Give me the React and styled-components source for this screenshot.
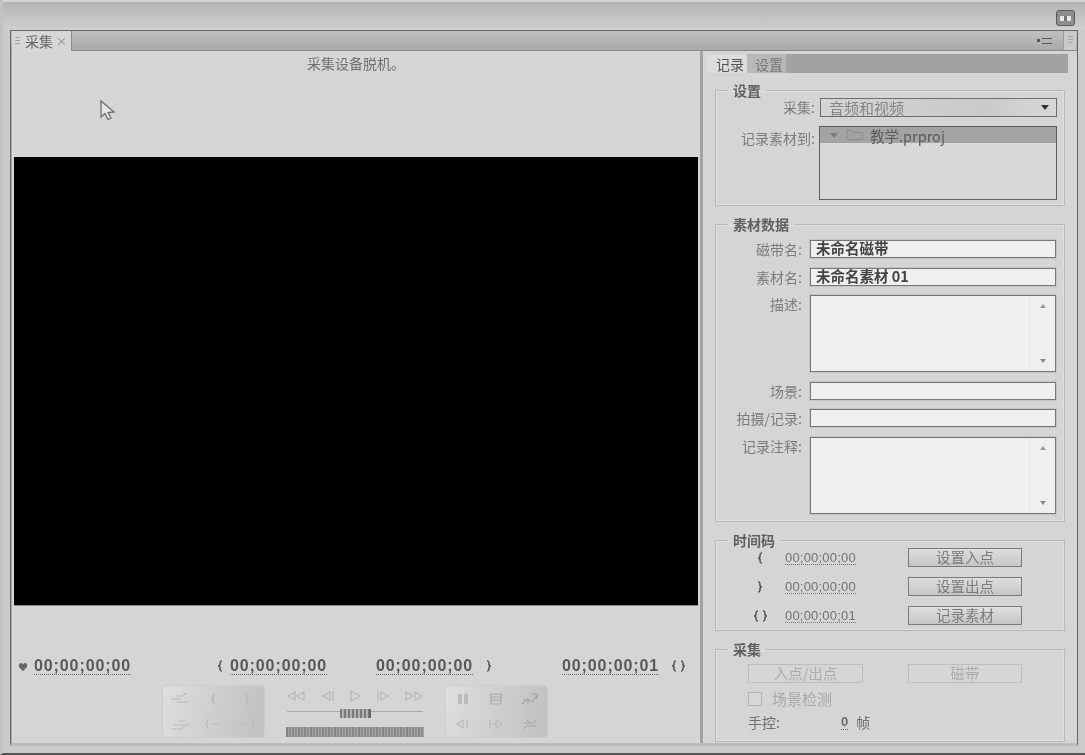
import styled, { createGlobalStyle } from "styled-components";

const GlobalStyle = createGlobalStyle`
  html, body { margin: 0; padding: 0; background: #d2d2d2; }
  body { font-family: "Noto Sans CJK SC", "Liberation Sans", sans-serif; overflow: hidden; }
  * { box-sizing: border-box; }
`;

const I = ({ w = 16, h = 12, children, c = "#b8b8b8", sw = 1.2 }) => (
  <svg width={w} height={h} viewBox={`0 0 ${w} ${h}`} fill="none" stroke={c} strokeWidth={sw}>
    {children}
  </svg>
);

const BraceIn = ({ c }) => (
  <I w={8} h={12} c={c} sw={1.6}><path d="M6 1C4 1 4 2 4 4c0 1-1 2-2 2 1 0 2 1 2 2 0 2 0 3 2 3" /></I>
);
const BraceOut = ({ c }) => (
  <I w={8} h={12} c={c} sw={1.6}><path d="M2 1c2 0 2 1 2 3 0 1 1 2 2 2-1 0-2 1-2 2 0 2 0 3-2 3" /></I>
);
const BraceBoth = ({ c }) => (
  <I w={15} h={12} c={c} sw={1.6}>
    <path d="M5 1C3 1 3 2 3 4c0 1-1 2-2 2 1 0 2 1 2 2 0 2 0 3 2 3" />
    <path d="M10 1c2 0 2 1 2 3 0 1 1 2 2 2-1 0-2 1-2 2 0 2 0 3-2 3" />
  </I>
);

const leftIcons = [
  <I w={20} h={14}><path d="M1 7h10M6 4h6l4-3M6 10h13" /></I>,
  <BraceIn />,
  <BraceOut />,
  <I w={20} h={14}><path d="M1 12h10l5-4h3M4 8h10M8 4h7" /></I>,
  <I w={16} h={14}><path d="M4 1C2 1 3 6 1 7c2 1 1 6 3 6M8 7h6" /></I>,
  <I w={16} h={14}><path d="M12 1c2 0 1 5 3 6-2 1-1 6-3 6M2 7h6" /></I>,
];

const rightIcons = [
  <I w={12} h={12} c="#a8a8a8"><path d="M2 1v10M4 1v10M8 1v10M10 1v10" /></I>,
  <I w={12} h={12} c="#a8a8a8"><path d="M1 1h10v10H1zM1 4h10M1 7h10" /></I>,
  <I w={18} h={14} c="#a4a4a4"><path d="M1 12l6-5 4 3 6-8M10 2h6v5M2 8h5v5" /></I>,
  <I w={16} h={12}><path d="M2 6l6-4v8zM12 2v8" /></I>,
  <I w={16} h={12}><path d="M2 2v8M14 6L8 2v8zM4 6h4" /></I>,
  <I w={16} h={14} c="#a8a8a8"><path d="M2 6h10l2-3M14 9H4l-2 3M5 3l3 3" /></I>,
];

const Cursor = () => (
  <CursorWrap>
    <svg width="18" height="24" viewBox="0 0 18 24">
      <path d="M2 2v16l4-3.5 3 6 3-1.5-3-5.5 6-.5z" fill="#e6e6e6" stroke="#707070" strokeWidth="1.3" />
    </svg>
  </CursorWrap>
);

export default function App() {
  return (
    <>
      <GlobalStyle />
      <Shell>
        <TopBar>
          <WindowButton><span /></WindowButton>
        </TopBar>
        <Panel>
          <TabBar>
            <Tab>
              <Grip />
              <span>采集</span>
              <Close>×</Close>
            </Tab>
            <TabSpacer />
            <MenuGlyph>
              <i />
              <b />
            </MenuGlyph>
            <GripBox><Grip /></GripBox>
          </TabBar>
          <Body>
            <Left>
              <Message>采集设备脱机。</Message>
              <Cursor />
              <Video />
              <TimeRow>
                <TimeItem>
                  <Heart>♥</Heart>
                  <BigTime>00;00;00;00</BigTime>
                </TimeItem>
                <TimeItem>
                  <BraceIn c="#555" />
                  <BigTime>00;00;00;00</BigTime>
                </TimeItem>
                <TimeItem $wide>
                  <BigTime>00;00;00;00</BigTime>
                  <BraceOut c="#555" />
                </TimeItem>
                <TimeItem $wide>
                  <BigTime>00;00;00;01</BigTime>
                  <BraceBoth c="#555" />
                </TimeItem>
              </TimeRow>
              <Transport>
                <ControlBox>
                  {leftIcons.map((icon, i) => <ControlCell key={i}>{icon}</ControlCell>)}
                </ControlBox>
                <Deck>
                  <DeckRow>
                    <I w={20} h={12}><path d="M9 2L2 6l7 4zM18 2l-7 4 7 4z" /></I>
                    <I w={14} h={12}><path d="M9 2L2 6l7 4zM12 1v10" /></I>
                    <I w={12} h={12}><path d="M2 1l9 5-9 5z" /></I>
                    <I w={14} h={12}><path d="M2 1v10M5 2l7 4-7 4z" /></I>
                    <I w={20} h={12}><path d="M2 2l7 4-7 4zM11 2l7 4-7 4z" /></I>
                  </DeckRow>
                  <Shuttle><ShuttleHandle /></Shuttle>
                  <Jog />
                </Deck>
                <ControlBox>
                  {rightIcons.map((icon, i) => <ControlCell key={i}>{icon}</ControlCell>)}
                </ControlBox>
              </Transport>
            </Left>
            <Right>
              <TabStrip>
                <SubTab $active>记录</SubTab>
                <SubTab>设置</SubTab>
              </TabStrip>
              <Groups>
                <Group>
                  <Legend>设置</Legend>
                  <SettingsGrid>
                    <Label>采集:</Label>
                    <Select>
                      <span>音频和视频</span>
                      <SelectArrow />
                    </Select>
                    <Label $low>记录素材到:</Label>
                    <ProjectList>
                      <ProjectRow>
                        <TreeArrow />
                        <svg width="18" height="12" viewBox="0 0 18 12" fill="none" stroke="#8a8a8a">
                          <path d="M1 10.5V1.5h5l1.5 2h9v7z" />
                        </svg>
                        <span>教学.prproj</span>
                      </ProjectRow>
                    </ProjectList>
                  </SettingsGrid>
                </Group>
                <Group>
                  <Legend>素材数据</Legend>
                  <DataGrid>
                    <Label>磁带名:</Label>
                    <Field>未命名磁带</Field>
                    <Label>素材名:</Label>
                    <Field>未命名素材 01</Field>
                    <Label>描述:</Label>
                    <TextArea><ScrollRail><Up /><Down /></ScrollRail></TextArea>
                    <Label>场景:</Label>
                    <Field />
                    <Label>拍摄/记录:</Label>
                    <Field />
                    <Label>记录注释:</Label>
                    <TextArea><ScrollRail><Up /><Down /></ScrollRail></TextArea>
                  </DataGrid>
                </Group>
                <Group>
                  <Legend>时间码</Legend>
                  <CodeGrid>
                    <CodeIcon><BraceIn c="#555" /></CodeIcon>
                    <SmallTime>00;00;00;00</SmallTime>
                    <PanelButton>设置入点</PanelButton>
                    <CodeIcon><BraceOut c="#555" /></CodeIcon>
                    <SmallTime>00;00;00;00</SmallTime>
                    <PanelButton>设置出点</PanelButton>
                    <CodeIcon><BraceBoth c="#555" /></CodeIcon>
                    <SmallTime>00;00;00;01</SmallTime>
                    <PanelButton>记录素材</PanelButton>
                  </CodeGrid>
                </Group>
                <Group>
                  <Legend>采集</Legend>
                  <CaptureBody>
                    <CaptureButtons>
                      <PanelButton $disabled>入点/出点</PanelButton>
                      <PanelButton $disabled>磁带</PanelButton>
                    </CaptureButtons>
                    <CheckRow>
                      <CheckBox />
                      <span>场景检测</span>
                    </CheckRow>
                    <ManualRow>
                      <span>手控:</span>
                      <FrameCount>0</FrameCount>
                      <span>帧</span>
                    </ManualRow>
                  </CaptureBody>
                </Group>
              </Groups>
            </Right>
          </Body>
        </Panel>
      </Shell>
    </>
  );
}

const Shell = styled.div`
  width: 1085px;
  height: 755px;
  background: #cbcbcb;
  border-bottom: 2px solid #555;
  border-left: 3px solid #c2c2c2;
  filter: blur(0.55px);
  overflow: hidden;
`;

const TopBar = styled.div`
  height: 30px;
  background: linear-gradient(#b4b4b4, #cfcfcf);
  border-top: 2px solid #d4d4d4;
  display: flex;
  justify-content: flex-end;
  align-items: center;
  padding: 4px 10px 0 0;
`;

const WindowButton = styled.div`
  width: 19px;
  height: 16px;
  border: 1.5px solid #5a5a5a;
  border-radius: 3px;
  background: #8e8e8e;
  display: flex;
  align-items: center;
  justify-content: center;
  span {
    width: 11px;
    height: 5px;
    background: linear-gradient(90deg, #e8e8e8 40%, #777 40% 60%, #e8e8e8 60%);
    border-radius: 1px;
  }
`;

const Panel = styled.div`
  margin-left: 7px;
  width: 1068px;
  height: 716px;
  border: 1px solid #686868;
  border-bottom: 3px solid #bcbcbc;
  display: flex;
  flex-direction: column;
  background: #d5d5d5;
`;

const TabBar = styled.div`
  height: 20px;
  display: flex;
  align-items: stretch;
  background: linear-gradient(#c0c0c0, #a9a9a9);
  border-bottom: 1px solid #8a8a8a;
`;

const Tab = styled.div`
  width: 60px;
  margin-left: 1px;
  height: 20px;
  background: #d7d7d7;
  border-right: 1px solid #8a8a8a;
  display: flex;
  align-items: center;
  gap: 5px;
  padding-left: 3px;
  font-size: 14px;
  color: #666;
`;

const Grip = styled.i`
  display: block;
  width: 5px;
  height: 9px;
  background: repeating-linear-gradient(#a4a4a4 0 1px, transparent 1px 3px);
`;

const Close = styled.span`
  font-size: 11px;
  color: #888;
  margin-left: -2px;
`;

const TabSpacer = styled.div`
  flex: 1;
`;

const MenuGlyph = styled.div`
  width: 18px;
  margin-right: 8px;
  display: flex;
  align-items: center;
  gap: 2px;
  i {
    width: 3px;
    height: 3px;
    background: #555;
  }
  b {
    width: 10px;
    height: 6px;
    border-top: 1px solid #555;
    border-bottom: 1px solid #555;
  }
`;

const GripBox = styled.div`
  width: 13px;
  margin-right: 1px;
  background: #cacaca;
  border-left: 1px solid #999;
  display: flex;
  align-items: center;
  justify-content: center;
`;

const Body = styled.div`
  flex: 1;
  min-height: 0;
  display: flex;
`;

const Left = styled.div`
  width: 692px;
  border-left: 1px solid #a8a8a8;
  border-right: 3px solid #a2a2a2;
  padding: 0 2px;
  position: relative;
  display: flex;
  flex-direction: column;
`;

const Message = styled.div`
  height: 106px;
  padding-top: 2px;
  text-align: center;
  font-size: 14px;
  line-height: 20px;
  color: #707070;
`;

const CursorWrap = styled.div`
  position: absolute;
  left: 87px;
  top: 48px;
  line-height: 0;
`;

const Video = styled.div`
  height: 448px;
  width: 684px;
  background: #000;
  box-shadow: 0 1px 0 #8e8e8e;
`;

const TimeRow = styled.div`
  margin-top: 51px;
  height: 20px;
  display: grid;
  grid-template-columns: 198px 160px 186px auto;
  padding-left: 4px;
`;

const TimeItem = styled.div`
  display: flex;
  align-items: center;
  gap: ${(p) => (p.$wide ? "12px" : "6px")};
`;

const Heart = styled.span`
  font-size: 10px;
  color: #666;
`;

const BigTime = styled.span`
  font-family: "Liberation Sans", sans-serif;
  font-weight: bold;
  font-size: 16px;
  letter-spacing: 0.9px;
  line-height: 17px;
  color: #585858;
  border-bottom: 1px dotted #6a6a6a;
`;

const Transport = styled.div`
  margin-top: 9px;
  display: flex;
  gap: 11px;
  padding-left: 148px;
`;

const ControlBox = styled.div`
  width: 103px;
  height: 53px;
  border: 1px solid #cdcdcd;
  border-radius: 4px;
  background: linear-gradient(100deg, #dedede, #c0c0c0);
  display: grid;
  grid-template-columns: repeat(3, 1fr);
  grid-template-rows: repeat(2, 1fr);
`;

const ControlCell = styled.div`
  display: flex;
  align-items: center;
  justify-content: center;
`;

const Deck = styled.div`
  width: 158px;
  display: flex;
  flex-direction: column;
  align-items: center;
`;

const DeckRow = styled.div`
  width: 100%;
  height: 22px;
  padding: 0 10px;
  display: flex;
  align-items: center;
  justify-content: space-between;
`;

const Shuttle = styled.div`
  width: 136px;
  height: 10px;
  margin-top: 4px;
  border-top: 1px solid #aaa;
  margin-bottom: 6px;
  display: flex;
  justify-content: center;
`;

const ShuttleHandle = styled.div`
  width: 31px;
  height: 9px;
  margin-top: -3px;
  background: repeating-linear-gradient(90deg, #7c7c7c 0 2px, #b2b2b2 2px 4px);
  border-right: 2px solid #666;
`;

const Jog = styled.div`
  width: 138px;
  height: 10px;
  background: repeating-linear-gradient(90deg, #868686 0 2px, #a4a4a4 2px 3px, #8e8e8e 3px 5px, #ababab 5px 6px);
`;

const Right = styled.div`
  flex: 1;
  padding-top: 3px;
  display: flex;
  flex-direction: column;
`;

const TabStrip = styled.div`
  height: 19px;
  margin: 0 9px 0 3px;
  background: #a2a2a2;
  display: flex;
`;

const SubTab = styled.div`
  width: ${(p) => (p.$active ? "41px" : "39px")};
  padding-left: ${(p) => (p.$active ? "10px" : "8px")};
  background: ${(p) => (p.$active ? "#dcdcdc" : "#b8b8b8")};
  color: ${(p) => (p.$active ? "#555" : "#767676")};
  font-size: 14px;
  line-height: 20px;
`;

const Groups = styled.div`
  padding: 10px 12px 0 12px;
  display: flex;
  flex-direction: column;
  gap: 11px;
`;

const Group = styled.fieldset`
  margin: 0;
  padding: 0;
  min-width: 0;
  border: 1px solid #b8b8b8;
  box-shadow: 0 0 0 1px #e0e0e0 inset;
`;

const Legend = styled.legend`
  margin-left: 12px;
  padding: 0 5px;
  font-size: 14px;
  line-height: 14px;
  font-weight: bold;
  color: #606060;
`;

const Label = styled.div`
  text-align: right;
  font-size: 14px;
  line-height: 18px;
  padding-top: ${(p) => (p.$low ? "3px" : "0")};
  color: #7c7c7c;
`;

const SettingsGrid = styled.div`
  height: 108px;
  padding: 1px 0 0 6px;
  display: grid;
  grid-template-columns: 93px 238px;
  grid-template-rows: 19px 74px;
  row-gap: 9px;
  column-gap: 4px;
`;

const Select = styled.div`
  border: 1px solid #6e6e6e;
  background: linear-gradient(90deg, #d4d4d4, #cacaca 70%, #d8d8d8);
  margin-left: 1px;
  display: flex;
  align-items: center;
  justify-content: space-between;
  padding: 0 7px 0 8px;
  font-size: 15px;
  color: #868686;
`;

const SelectArrow = styled.i`
  border: 4px solid transparent;
  border-top: 5px solid #333;
  border-bottom: 0;
`;

const ProjectList = styled.div`
  border: 1px solid #5e5e5e;
  background: #d8d8d8;
`;

const ProjectRow = styled.div`
  height: 16px;
  background: #a3a3a3;
  display: flex;
  align-items: center;
  gap: 6px;
  padding-left: 10px;
  font-size: 14.5px;
  line-height: 15px;
  color: #5c5c5c;
`;

const TreeArrow = styled.i`
  border: 4px solid transparent;
  border-top: 5px solid #7c7c7c;
  border-bottom: 0;
  margin-right: 2px;
`;

const DataGrid = styled.div`
  height: 290px;
  padding: 9px 0 0 6px;
  display: grid;
  grid-template-columns: 80px 246px;
  grid-template-rows: 18px 18px 77px 18px 18px 77px;
  row-gap: 9.6px;
  column-gap: 8px;
`;

const Field = styled.div`
  border: 1px solid #777;
  box-shadow: 0 0 0 1px #c4c4c4;
  background: #efefef;
  padding-left: 5px;
  font-size: 14.5px;
  line-height: 14px;
  font-weight: bold;
  color: #444;
`;

const TextArea = styled.div`
  border: 1px solid #777;
  box-shadow: 0 0 0 1px #c4c4c4;
  background: #efefef;
  display: flex;
  justify-content: flex-end;
`;

const ScrollRail = styled.div`
  width: 26px;
  padding: 8px 0 8px;
  border-left: 1px solid #e6e6e6;
  display: flex;
  flex-direction: column;
  align-items: center;
  justify-content: space-between;
`;

const Up = styled.i`
  border: 3.5px solid transparent;
  border-bottom: 4px solid #9a9a9a;
  border-top: 0;
`;

const Down = styled.i`
  border: 3.5px solid transparent;
  border-top: 4px solid #8a8a8a;
  border-bottom: 0;
`;

const CodeGrid = styled.div`
  height: 83px;
  padding: 1px 0 0 32px;
  display: grid;
  grid-template-columns: 24px 136px 114px;
  grid-auto-rows: 19px;
  row-gap: 10px;
`;

const CodeIcon = styled.div`
  display: flex;
  align-items: center;
  justify-content: center;
`;

const SmallTime = styled.div`
  align-self: center;
  justify-self: start;
  margin-left: 13px;
  font-family: "Liberation Sans", sans-serif;
  font-size: 13px;
  line-height: 13px;
  letter-spacing: 0.2px;
  color: #737373;
  border-bottom: 1px dotted #777;
`;

const PanelButton = styled.div`
  height: 19px;
  border: 1px solid ${(p) => (p.$disabled ? "#bdbdbd" : "#7a7a7a")};
  background: ${(p) => (p.$disabled ? "#d6d6d6" : "linear-gradient(#dedede, #c6c6c6)")};
  color: ${(p) => (p.$disabled ? "#ababab" : "#7c7c7c")};
  text-align: center;
  font-size: 14.5px;
  line-height: 15px;
`;

const CaptureBody = styled.div`
  height: 85px;
  padding: 8px 0 0 32px;
`;

const CaptureButtons = styled.div`
  display: grid;
  grid-template-columns: 115px 114px;
  column-gap: 45px;
  width: 274px;
`;

const CheckRow = styled.div`
  margin-top: 9px;
  display: flex;
  align-items: center;
  gap: 10px;
  font-size: 15px;
  line-height: 14px;
  color: #a8a8a8;
`;

const CheckBox = styled.i`
  width: 14px;
  height: 14px;
  border: 1px solid #b4b4b4;
  background: #d8d8d8;
`;

const ManualRow = styled.div`
  margin-top: 7px;
  display: flex;
  align-items: center;
  font-size: 14px;
  line-height: 18px;
  color: #6e6e6e;
`;

const FrameCount = styled.span`
  margin-left: 61px;
  margin-right: 8px;
  font-family: "Liberation Sans", sans-serif;
  font-weight: bold;
  font-size: 13px;
  border-bottom: 1px dotted #666;
  line-height: 14px;
`;
